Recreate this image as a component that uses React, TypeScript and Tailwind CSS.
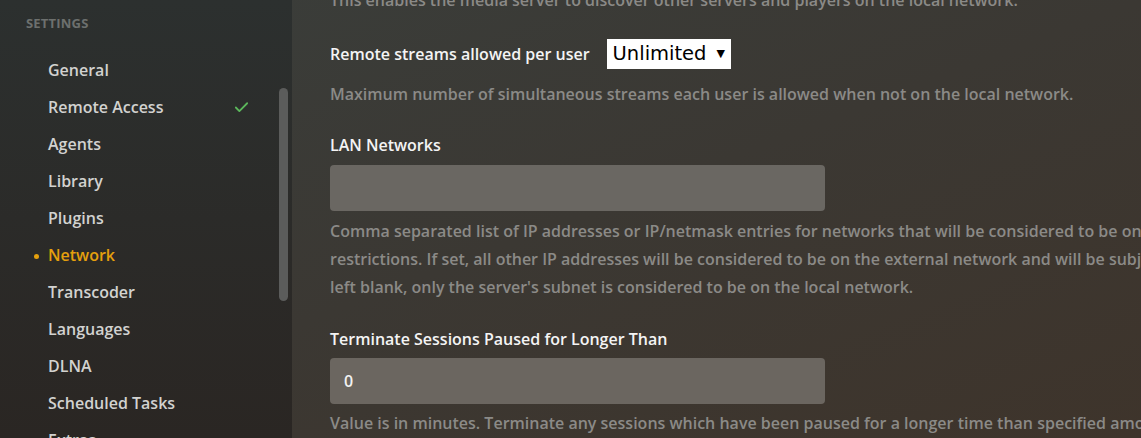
import { Check } from "lucide-react";

const navItems = [
  "General",
  "Remote Access",
  "Agents",
  "Library",
  "Plugins",
  "Network",
  "Transcoder",
  "Languages",
  "DLNA",
  "Scheduled Tasks",
  "Extras",
];

function Sidebar() {
  return (
    <aside className="relative w-[292px] shrink-0 h-full bg-gradient-to-b from-[#2c302f] to-[#2a2623] overflow-hidden">
      <div className="pl-[26px] pt-[14px] text-[13px] font-bold uppercase tracking-[0.2px] text-[#6d706e]">
        Settings
      </div>
      <ul className="mt-[18px]">
        {navItems.map((item) => {
          const active = item === "Network";
          return (
            <li
              key={item}
              className={`relative h-[37px] flex items-center pl-[48px] text-[16px] font-semibold ${
                active ? "text-[#e5a00d]" : "text-[#d2d2d0]"
              }`}
            >
              {active && (
                <span className="absolute left-[34px] top-[17px] w-[5px] h-[5px] rounded-full bg-[#e5a00d]" />
              )}
              {item}
              {item === "Remote Access" && (
                <Check
                  className="absolute left-[233px] top-[10px] text-[#5cb85c]"
                  size={17}
                  strokeWidth={2.5}
                />
              )}
            </li>
          );
        })}
      </ul>
      <div className="absolute left-[279px] top-[88px] w-[9px] h-[213px] rounded-full bg-[#5b5c5b]" />
    </aside>
  );
}

function Help({ children }: { children: React.ReactNode }) {
  return (
    <p className="text-[16px] font-semibold leading-[28px] text-[#8b8a87] whitespace-nowrap">
      {children}
    </p>
  );
}

function Label({ children }: { children: React.ReactNode }) {
  return (
    <div className="text-[16px] leading-[22px] font-semibold text-[#f4f4f4] whitespace-nowrap">
      {children}
    </div>
  );
}

export default function App() {
  return (
    <div
      className="flex w-[1141px] h-[438px] overflow-hidden bg-gradient-to-br from-[#3a3e3b] via-[#3b3833] to-[#3e342b]"
      style={{ fontFamily: '"Open Sans", "Liberation Sans", sans-serif' }}
    >
      <Sidebar />
      <main className="flex-1 pl-[38px] overflow-hidden">
        <div className="-mt-[14px]">
          <Help>
            This enables the media server to discover other servers and players
            on the local network.
          </Help>
        </div>

        <div className="mt-[25px] h-[30px] flex items-center">
          <Label>Remote streams allowed per user</Label>
          <div
            className="ml-[17px] w-[124px] h-[30px] bg-white flex items-center pl-[6px] text-[19.5px] text-black"
            style={{ fontFamily: '"DejaVu Sans", sans-serif' }}
          >
            Unlimited
            <span className="ml-[10px] text-[11px]">▼</span>
          </div>
        </div>
        <div className="mt-[11px]">
          <Help>
            Maximum number of simultaneous streams each user is allowed when not
            on the local network.
          </Help>
        </div>

        <div className="mt-[26px]">
          <Label>LAN Networks</Label>
        </div>
        <div className="mt-[9px] w-[495px] h-[46px] rounded-[4px] bg-[#6a6762]" />
        <div className="mt-[6px]">
          <Help>
            Comma separated list of IP addresses or IP/netmask entries for
            networks that will be considered to be on the local network when
            enforcing bandwidth
          </Help>
          <Help>
            restrictions. If set, all other IP addresses will be considered to be
            on the external network and will be subject to external network
            bandwidth restrictions. If
          </Help>
          <Help>
            left blank, only the server's subnet is considered to be on the local
            network.
          </Help>
        </div>

        <div className="mt-[27px]">
          <Label>Terminate Sessions Paused for Longer Than</Label>
        </div>
        <div className="mt-[8px] w-[495px] h-[46px] rounded-[4px] bg-[#6b6660] flex items-center pl-[14px] text-[16px] font-semibold text-[#f2f2f2]">
          0
        </div>
        <div className="mt-[5px]">
          <Help>
            Value is in minutes. Terminate any sessions which have been paused
            for a longer time than specified among the sessions.
          </Help>
        </div>
      </main>
    </div>
  );
}
